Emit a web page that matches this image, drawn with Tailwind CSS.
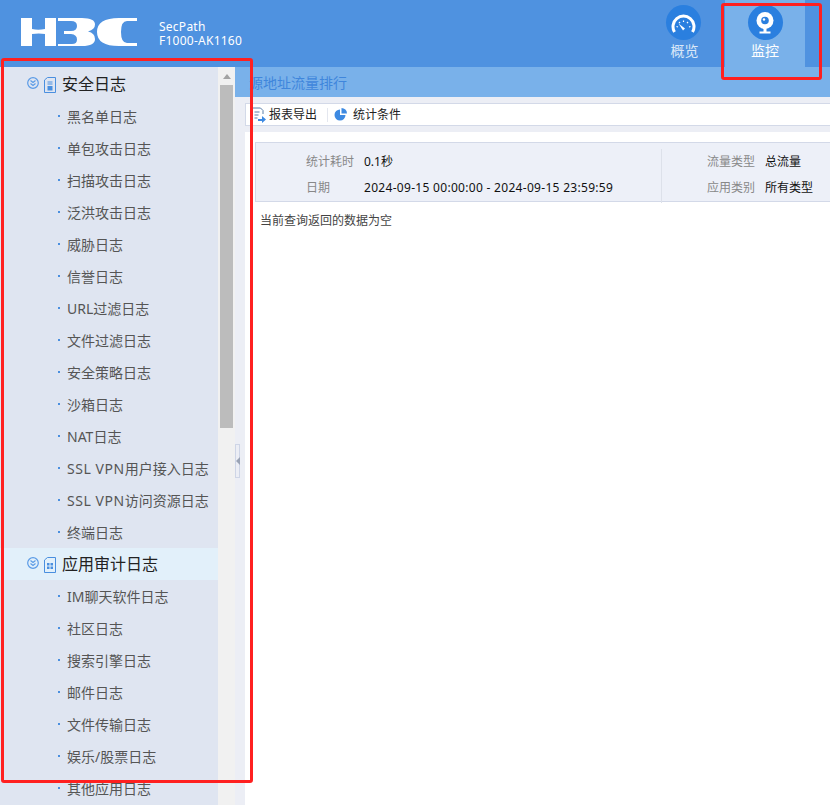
<!DOCTYPE html>
<html><head><meta charset="utf-8"><script src="https://cdn.jsdelivr.net/npm/@tailwindcss/browser@4"></script></head>
<body class="m-0 overflow-hidden bg-white">
<div class="relative w-[830px] h-[805px] overflow-hidden flex flex-col font-['Noto_Sans','Noto_Sans_CJK_SC',sans-serif]">
  <!-- header -->
  <header class="h-[67px] shrink-0 bg-[#4f92e0] flex items-stretch relative">
    <div class="pl-5 pt-[16px] w-[159px] shrink-0">
      <svg width="118" height="32" viewBox="0 0 118 32" fill="#fff">
        <path d="M1 2h11v11q6 1.500 13 0V2h11v28H25V18q-6-1-13 0v12H1z"/>
        <path d="M38 2h24q13 0 13 6.500q0 5-7 7q7 1.500 7 7.500q0 7-13 7H38v-2h14q5 0 5-4.500q0-5-6-5.500h-7v-3h7q6 0 6-5q0-5-6-5H38z"/>
        <path d="M117 2H99Q77 2 77 16t22 14h18v-3h-10q-6 0-6-11t6-11h10z"/>
      </svg>
    </div>
    <div class="pt-[20px] text-white text-[12px] leading-[14px] tracking-[0.25px]"><div>SecPath</div><div>F1000-AK1160</div></div>
    <div class="flex-1"></div>
    <div class="w-[87px] flex flex-col items-center pt-[5px] mr-[-2px]">
      <div class="w-[35px] h-[35px] rounded-full bg-[#2a7fdf] flex items-center justify-center">
        <svg width="25" height="20" viewBox="0 0 25 20" fill="none" stroke="#fff">
          <path d="M3.500 19A10.500 10.500 0 1 1 21.500 19" stroke-width="3"/>
          <path d="M5.500 13.500l1.500 .5M8 9l1 1.200M12.500 7.500v1.500M17 9l-1 1.200M19.500 13.500l-1.500 .5" stroke-width="1.200"/>
          <path d="M14 15.500L7.500 10.500l4.500 7z" fill="#fff" stroke="none"/>
        </svg>
      </div>
      <div class="text-[#dbe8f8] text-[14px] leading-[18px] mt-[2px] ml-[2px]">概览</div>
    </div>
    <div class="w-[80px] bg-[#79b1ea] flex flex-col items-center pt-[5px] mr-[25px]">
      <div class="w-[35px] h-[35px] rounded-full bg-[#2a7fdf] flex items-center justify-center">
        <svg width="20" height="22" viewBox="0 0 20 22" fill="#fff">
          <circle cx="10" cy="8.500" r="8.500"/><circle cx="10" cy="8.500" r="3.800" fill="#2a7fdf"/><circle cx="9" cy="7.500" r="1.200"/>
          <path d="M8.500 16h3v3.500h-3zM4.500 19.500h11V21.500h-11z"/>
        </svg>
      </div>
      <div class="text-white text-[14px] leading-[18px] mt-[2px]">监控</div>
    </div>
  </header>
  <div class="flex-1 flex min-h-0">
    <!-- sidebar -->
    <aside class="w-[218px] shrink-0 bg-[#dfe5f1] pt-px">
      <div class="h-8 flex items-center">
        <svg class="ml-[27px] mb-[2px] shrink-0" width="12" height="12" viewBox="0 0 12 12" fill="none" stroke="#5b9be6" stroke-width="1.200"><circle cx="6" cy="6" r="5.300"/><path d="M3.500 3.500L6 5.500l2.500-2M3.500 6.500L6 8.500l2.500-2"/></svg>
        <svg class="ml-[5px] mt-[2px] shrink-0" width="12" height="16" viewBox="0 0 12 16" fill="none" stroke="#4a8fdf"><path d="M.5 3l3-2.500h8v15H.5z"/><path d="M3.500 5h5M3.500 7h5" /><rect x="3.500" y="9" width="5" height="4.500" fill="#4a8fdf" stroke="none"/></svg>
        <span class="ml-[6px] text-[16px] text-[#222]">安全日志</span>
      </div>
      <ul class="text-[14px] text-[#555]">
        <li class="h-8 flex items-center pl-[58px]"><i class="w-[2px] h-[2px] bg-[#4a8fdf] mr-[7px]"></i>黑名单日志</li>
        <li class="h-8 flex items-center pl-[58px]"><i class="w-[2px] h-[2px] bg-[#4a8fdf] mr-[7px]"></i>单包攻击日志</li>
        <li class="h-8 flex items-center pl-[58px]"><i class="w-[2px] h-[2px] bg-[#4a8fdf] mr-[7px]"></i>扫描攻击日志</li>
        <li class="h-8 flex items-center pl-[58px]"><i class="w-[2px] h-[2px] bg-[#4a8fdf] mr-[7px]"></i>泛洪攻击日志</li>
        <li class="h-8 flex items-center pl-[58px]"><i class="w-[2px] h-[2px] bg-[#4a8fdf] mr-[7px]"></i>威胁日志</li>
        <li class="h-8 flex items-center pl-[58px]"><i class="w-[2px] h-[2px] bg-[#4a8fdf] mr-[7px]"></i>信誉日志</li>
        <li class="h-8 flex items-center pl-[58px]"><i class="w-[2px] h-[2px] bg-[#4a8fdf] mr-[7px]"></i>URL过滤日志</li>
        <li class="h-8 flex items-center pl-[58px]"><i class="w-[2px] h-[2px] bg-[#4a8fdf] mr-[7px]"></i>文件过滤日志</li>
        <li class="h-8 flex items-center pl-[58px]"><i class="w-[2px] h-[2px] bg-[#4a8fdf] mr-[7px]"></i>安全策略日志</li>
        <li class="h-8 flex items-center pl-[58px]"><i class="w-[2px] h-[2px] bg-[#4a8fdf] mr-[7px]"></i>沙箱日志</li>
        <li class="h-8 flex items-center pl-[58px]"><i class="w-[2px] h-[2px] bg-[#4a8fdf] mr-[7px]"></i>NAT日志</li>
        <li class="h-8 flex items-center pl-[58px]"><i class="w-[2px] h-[2px] bg-[#4a8fdf] mr-[7px]"></i><span><span class="tracking-[0.55px]">SSL VPN</span>用户接入日志</span></li>
        <li class="h-8 flex items-center pl-[58px]"><i class="w-[2px] h-[2px] bg-[#4a8fdf] mr-[7px]"></i><span><span class="tracking-[0.55px]">SSL VPN</span>访问资源日志</span></li>
        <li class="h-8 flex items-center pl-[58px]"><i class="w-[2px] h-[2px] bg-[#4a8fdf] mr-[7px]"></i>终端日志</li>
      </ul>
      <div class="h-8 flex items-center bg-[#e2f0fa]">
        <svg class="ml-[27px] mb-[2px] shrink-0" width="12" height="12" viewBox="0 0 12 12" fill="none" stroke="#5b9be6" stroke-width="1.200"><circle cx="6" cy="6" r="5.300"/><path d="M3.500 3.500L6 5.500l2.500-2M3.500 6.500L6 8.500l2.500-2"/></svg>
        <svg class="ml-[5px] mt-[2px] shrink-0" width="12" height="16" viewBox="0 0 12 16" fill="none" stroke="#4a8fdf"><path d="M.5 3l3-2.500h8v15H.5z"/><rect x="3" y="6" width="2.500" height="2.500" fill="#4a8fdf" stroke="none"/><rect x="6.500" y="6" width="2.500" height="2.500" fill="#4a8fdf" stroke="none"/><rect x="3" y="9.500" width="2.500" height="2.500" fill="#4a8fdf" stroke="none"/><rect x="6.500" y="9.500" width="2.500" height="2.500" fill="#4a8fdf" stroke="none"/></svg>
        <span class="ml-[6px] text-[16px] text-[#222]">应用审计日志</span>
      </div>
      <ul class="text-[14px] text-[#555]">
        <li class="h-8 flex items-center pl-[58px]"><i class="w-[2px] h-[2px] bg-[#4a8fdf] mr-[7px]"></i>IM聊天软件日志</li>
        <li class="h-8 flex items-center pl-[58px]"><i class="w-[2px] h-[2px] bg-[#4a8fdf] mr-[7px]"></i>社区日志</li>
        <li class="h-8 flex items-center pl-[58px]"><i class="w-[2px] h-[2px] bg-[#4a8fdf] mr-[7px]"></i>搜索引擎日志</li>
        <li class="h-8 flex items-center pl-[58px]"><i class="w-[2px] h-[2px] bg-[#4a8fdf] mr-[7px]"></i>邮件日志</li>
        <li class="h-8 flex items-center pl-[58px]"><i class="w-[2px] h-[2px] bg-[#4a8fdf] mr-[7px]"></i>文件传输日志</li>
        <li class="h-8 flex items-center pl-[58px]"><i class="w-[2px] h-[2px] bg-[#4a8fdf] mr-[7px]"></i>娱乐/股票日志</li>
        <li class="h-8 flex items-center pl-[58px]"><i class="w-[2px] h-[2px] bg-[#4a8fdf] mr-[7px]"></i>其他应用日志</li>
      </ul>
    </aside>
    <!-- scrollbar -->
    <div class="w-[17px] shrink-0 bg-[#f1f1f1] flex flex-col items-center pt-[7px]">
      <div class="w-0 h-0 border-x-[4px] border-x-transparent border-b-[5px] border-b-[#a3a3a3]"></div>
      <div class="w-[13px] h-[343px] mt-[6px] bg-[#bcbcbc]"></div>
    </div>
    <!-- main -->
    <main class="flex-1 min-w-0 flex flex-col">
      <div class="h-[30px] bg-[#79b1ea] text-[#3f86dc] text-[14px] leading-[31px] pl-[14px] shrink-0">源地址流量排行</div>
      <div class="flex-1 flex min-h-0">
        <div class="w-[10px] shrink-0 bg-[#eceef5] relative">
          <div class="absolute left-0 top-[347px] w-[5px] h-[34px] border border-[#ced5e6] flex items-center"><i class="w-0 h-0 border-y-[4px] border-y-transparent border-r-[4px] border-r-[#9aa3b5]"></i></div>
        </div>
        <div class="flex-1 min-w-0 flex flex-col">
          <div class="h-[6px] bg-[#eceef5]"></div>
          <div class="h-[23px] bg-white border border-r-0 border-[#d3d9e8] flex items-center text-[12px] text-[#222] pl-[5px]">
            <svg width="16" height="16" viewBox="0 0 16 16" fill="none" stroke="#5a7ea8"><path d="M1.500 15V1h8l2.500 2.500V7" /><path d="M3.500 5h5M3.500 8h4M3.500 11h3"/><path d="M7 12h4V9l4 3.500-4 3.500v-2H7z" fill="#3d8ae2" stroke="none"/></svg>
            <span class="ml-[2px]">报表导出</span>
            <i class="w-px h-[14px] bg-[#e4e7ef] ml-[10px]"></i>
            <svg class="ml-[6px]" width="13" height="13" viewBox="0 0 13 13"><path d="M6 1.500A5.500 5.500 0 1 0 11.500 7H6z" fill="#3d8ae2"/><path d="M7.500 0A5.500 5.500 0 0 1 13 5.500H7.500z" fill="#3d8ae2"/></svg>
            <span class="ml-[6px]">统计条件</span>
          </div>
          <div class="h-[6px] bg-[#eceef5]"></div>
          <div class="pl-[10px] pt-[10px]">
            <div class="h-[60px] bg-[#edf0f8] border-y border-l border-[#d3d9e8] flex text-[12px] relative">
              <div class="w-[405px] flex flex-col pt-[6px]">
                <div class="h-[26px] flex items-center"><span class="w-[98px] text-right text-[#888]">统计耗时</span><span class="ml-[10px] text-[#111]">0.1秒</span></div>
                <div class="h-[26px] flex items-center"><span class="w-[74px] text-right text-[#888]">日期</span><span class="ml-[34px] text-[#111] whitespace-nowrap tracking-[0.3px]">2024-09-15 00:00:00 - 2024-09-15 23:59:59</span></div>
              </div>
              <i class="w-px h-[54px] mt-[6px] bg-[#dde1ea]"></i>
              <div class="flex flex-col pt-[6px]">
                <div class="h-[26px] flex items-center"><span class="w-[93px] text-right text-[#888]">流量类型</span><span class="ml-[10px] text-[#111]">总流量</span></div>
                <div class="h-[26px] flex items-center"><span class="w-[93px] text-right text-[#888]">应用类别</span><span class="ml-[10px] text-[#111]">所有类型</span></div>
              </div>
            </div>
          </div>
          <div class="pl-[15px] mt-[11px] text-[12px] leading-[16px] text-[#444]">当前查询返回的数据为空</div>
        </div>
      </div>
    </main>
  </div>
  <!-- red annotation boxes -->
  <div class="absolute left-[1px] top-[58px] w-[252px] h-[725px] border-[3px] border-[#ff2020] rounded-[3px]"></div>
  <div class="absolute left-[721px] top-[3px] w-[101px] h-[77px] border-[3px] border-[#ff2020] rounded-[3px]"></div>
</div>
</body></html>
